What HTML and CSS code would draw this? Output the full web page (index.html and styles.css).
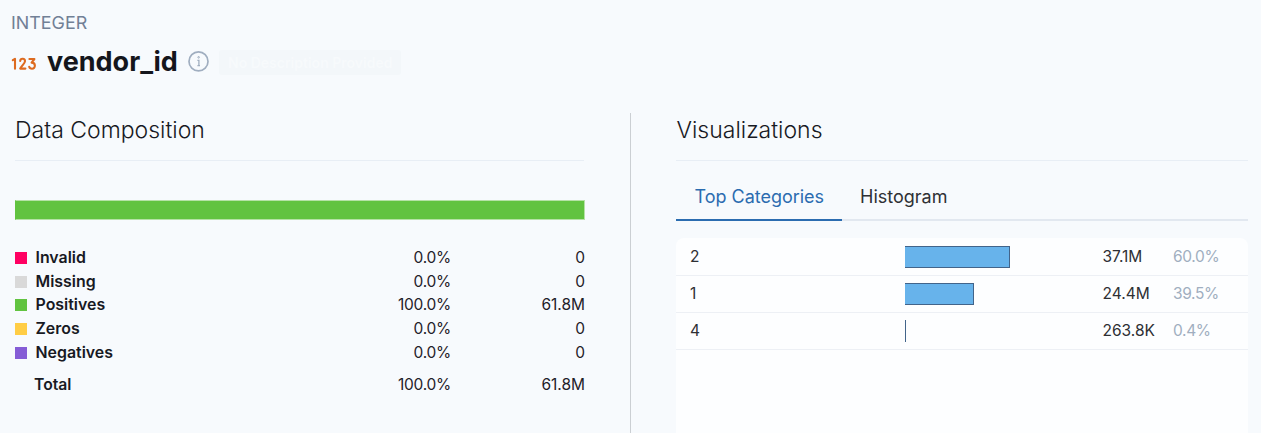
FILE: index.html
```html
<!DOCTYPE html>
<html lang="en">
<head>
<meta charset="utf-8">
<title>vendor_id</title>
<link rel="stylesheet" href="styles.css">
</head>
<body>
<header class="head">
  <div class="type">INTEGER</div>
  <div class="title-row">
    <svg class="num-icon" width="26" height="14" viewBox="0 0 26 14" fill="none" stroke="#dd6b20" stroke-width="2.1" stroke-linecap="round" stroke-linejoin="round"><path d="M1.8 3.2L4 1.8V11.8"/><path d="M9.2 4C9.4 .9 14.1 1 14 4.2C13.9 6.3 11 8.2 9.2 11.6H14.4"/><path d="M18.4 2H23.4L20.6 5.6C24.9 5.5 24.9 11.7 21 11.7C19.5 11.7 18.5 10.9 18.2 9.8"/></svg>
    <h1 class="name">vendor_id</h1>
    <svg class="info" width="22" height="22" viewBox="0 0 22 22" fill="none" stroke="#a0aec0"><circle cx="10.5" cy="10.4" r="9.5" stroke-width="1.7"/><path d="M9.4 9.3H10.9V14.7M9.4 14.7H12" stroke-width="1.3"/><circle cx="10.6" cy="6.3" r=".8" stroke-width="1"/></svg>
    <span class="badge">No Description Provided</span>
  </div>
</header>
<main class="columns">
  <section class="composition">
    <h2 class="heading">Data Composition</h2>
    <div class="stack"></div>
    <div class="legend">
      <div class="row"><i class="swatch invalid"></i><b>Invalid</b><span class="pct">0.0%</span><span class="count">0</span></div>
      <div class="row"><i class="swatch missing"></i><b>Missing</b><span class="pct">0.0%</span><span class="count">0</span></div>
      <div class="row"><i class="swatch positives"></i><b>Positives</b><span class="pct">100.0%</span><span class="count">61.8M</span></div>
      <div class="row"><i class="swatch zeros"></i><b>Zeros</b><span class="pct">0.0%</span><span class="count">0</span></div>
      <div class="row"><i class="swatch negatives"></i><b>Negatives</b><span class="pct">0.0%</span><span class="count">0</span></div>
      <div class="row total"><b>Total</b><span class="pct">100.0%</span><span class="count">61.8M</span></div>
    </div>
  </section>
  <section class="visuals">
    <h2 class="heading">Visualizations</h2>
    <nav class="tabs"><a class="tab active">Top Categories</a><a class="tab">Histogram</a></nav>
    <div class="panel">
      <div class="cat"><span>2</span><span><i class="bar" style="width:104.5px"></i></span><span>37.1M</span><span class="share">60.0%</span></div>
      <div class="cat"><span>1</span><span><i class="bar" style="width:69px"></i></span><span>24.4M</span><span class="share">39.5%</span></div>
      <div class="cat"><span>4</span><span><i class="bar" style="width:1px"></i></span><span>263.8K</span><span class="share">0.4%</span></div>
    </div>
  </section>
</main>
</body>
</html>
```
FILE: styles.css
```css
* { box-sizing: border-box; }
body {
  margin: 0;
  height: 433px;
  overflow: hidden;
  display: flex;
  flex-direction: column;
  background: #f7fafd;
  color: #171923;
  font-family: Inter, "Liberation Sans", sans-serif;
  font-size: 15.5px;
}
h1, h2 { margin: 0; }
.head { height: 113px; padding: 11px 0 0 11px; flex: none; }
.type { font-size: 17.9px; line-height: 24px; color: #718096; font-weight: 400; }
.title-row { display: flex; align-items: center; height: 54px; }
.num-icon { flex: none; margin-top: 3px; }
.name { margin: -2px 0 0 10px; width: 131px; font-size: 27px; font-weight: 700; white-space: nowrap; color: #14161c; }
.info { flex: none; margin-left: 10px; }
.badge {
  width: 182px;
  height: 25px;
  margin-left: 9px;
  padding-left: 9px;
  border-radius: 3px;
  background: #f3f7fa;
  color: #f7fafc;
  font-size: 14px;
  font-weight: 600;
  line-height: 25px;
  white-space: nowrap;
}
.columns { flex: 1; display: flex; }
.composition { width: 631px; padding: 0 46px 0 15px; border-right: 1px solid #cbcfd3; }
.visuals { flex: 1; padding: 0 13px 0 45px; display: flex; flex-direction: column; }
.heading {
  flex: none;
  height: 48px;
  border-bottom: 1px solid #e8eef5;
  font-size: 23px;
  font-weight: 300;
  line-height: 34px;
}
.visuals .heading { padding-left: .5px; }
.stack { height: 20px; margin: 39px -1px 0 0; background: #61c340; border: 1px solid #b5e2a6; border-left-color: #61c340; }
.legend { margin: 26px -1px 0 0; }
.row { display: grid; grid-template-columns: 20.5px 1fr 200px 135px; align-items: center; height: 23.75px; line-height: 20px; }
.row b { font-weight: 600; font-size: 15.9px; }
.swatch { width: 12px; height: 12px; }
.invalid { background: #ff0062; }
.missing { background: #d9d9d9; }
.positives { background: #61c340; }
.zeros { background: #ffcd45; }
.negatives { background: #855cd6; }
.pct, .count { text-align: right; color: #1f2129; }
.count { padding-right: 0; }
.pct { font-size: 15.5px; letter-spacing: -.25px; position: static; margin-right: -1px; }
.row .pct { font-weight: 400; }
.total { margin-top: 8px; grid-template-columns: 1fr 200px 135px; padding-left: 19px; }
.total b { font-size: 15.7px; }
.tabs { flex: none; display: flex; height: 60px; border-bottom: 2px solid #e2e8f0; }
.tab { height: 60px; padding: 24px 18px 0; font-size: 18px; line-height: 24px; color: #2e3034; border-bottom: 2px solid transparent; }
.tab.active { width: 166px; padding-left: 18.5px; padding-right: 0; letter-spacing: -.02px; color: #2b6cb0; border-color: #2b6cb0; white-space: nowrap; }
.panel { flex: 1; margin-top: 17px; padding-top: 1px; background: #fdfeff; border-radius: 8px 8px 0 0; color: #2e3034; }
.cat {
  display: grid;
  grid-template-columns: 215px 197.5px 70.5px 1fr;
  align-items: center;
  height: 37px;
  padding-left: 14px;
  border-bottom: 1px solid #edf0f5;
  line-height: 20px;
}
.cat > span:not(:nth-child(2)) { margin-top: -1px; }
.bar { display: block; height: 22px; background: #67b3eb; border: 1px solid #42648a; border-left: 0; }
.share { color: #a0aec0; font-size: 15.5px; letter-spacing: -.35px; }
```
